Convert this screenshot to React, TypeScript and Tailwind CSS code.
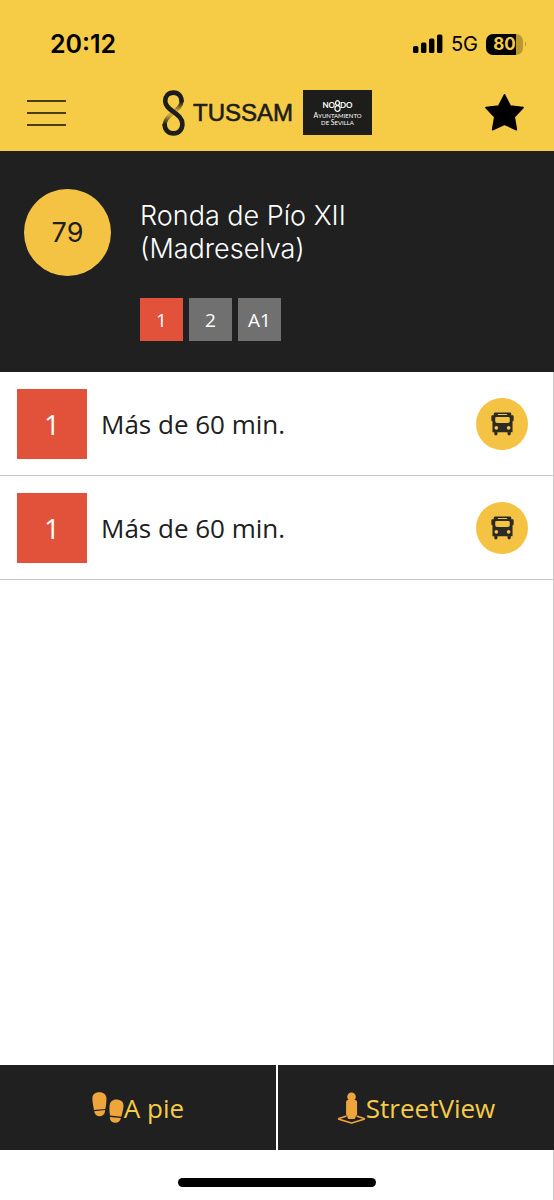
const arrivals = [
  { line: '1', time: 'Más de 60 min.' },
  { line: '1', time: 'Más de 60 min.' },
];

const lines = [
  { name: '1', active: true },
  { name: '2', active: false },
  { name: 'A1', active: false },
];

function StatusBar() {
  return (
    <div className="flex h-[74px] items-center justify-between pt-3.5 pr-7 pl-[50px] text-black">
      <span className="text-[25px] leading-8 font-semibold">20:12</span>
      <div className="flex items-center gap-2">
        <svg className="h-5 w-[30px]" viewBox="0 0 30 20" aria-label="Cobertura">
          <rect x="0" y="12" width="5.4" height="7" rx="1.6" />
          <rect x="8" y="8.5" width="5.4" height="10.5" rx="1.6" />
          <rect x="16" y="4.5" width="5.4" height="14.5" rx="1.6" />
          <rect x="24" y="0.5" width="5.4" height="18.5" rx="1.6" />
        </svg>
        <span className="text-[20px] leading-8">5G</span>
        <div className="flex items-center gap-0.5">
          <div className="flex h-[21px] w-[37px] items-center justify-center rounded-[7px] bg-linear-to-r from-black from-80% to-[#b8982f] to-80%">
            <span className="text-[17px] leading-5 font-bold text-[#f6cc46]">80</span>
          </div>
          <div className="h-1 w-px rounded-r bg-[#b8982f]" />
        </div>
      </div>
    </div>
  );
}

function KnotLogo() {
  return (
    <svg className="h-[46px] w-[23px]" viewBox="0 0 23 46" fill="none" aria-hidden="true">
      <defs>
        <linearGradient id="knot-up" gradientUnits="userSpaceOnUse" x1="0" y1="12" x2="0" y2="34">
          <stop offset="0" stopColor="#1d1d1b" />
          <stop offset="0.4" stopColor="#c9a63d" />
          <stop offset="0.6" stopColor="#c9a63d" />
          <stop offset="1" stopColor="#1d1d1b" />
        </linearGradient>
      </defs>
      <path d="M19.6 11.5C19.4 21 2.8 24 2.6 34.6" stroke="url(#knot-up)" strokeWidth="4" />
      <path
        d="M19.6 12C19.8 6.5 16.8 2.6 11.5 2.6C6.2 2.6 3.2 6.5 3.2 11C3.2 21 20.4 23 20.4 34C20.4 39.6 16.6 43.4 11.5 43.4C6.2 43.4 2.6 39.6 2.6 34"
        stroke="#1d1d1b"
        strokeWidth="4.6"
      />
    </svg>
  );
}

function CityBadge() {
  return (
    <div className="ml-2.5 flex h-[45px] w-[69px] flex-col items-center justify-center bg-[#1d1d1b] font-['Lato'] text-white">
      <div className="flex items-center text-[8px] leading-[11px] font-bold">
        <span>NO</span>
        <svg className="-mx-px h-3 w-[7px]" viewBox="0 0 7 12" fill="none" stroke="currentColor" aria-label="8">
          <ellipse cx="3.5" cy="3" rx="2" ry="2.3" strokeWidth="1.2" />
          <ellipse cx="3.5" cy="8.5" rx="2.6" ry="2.8" strokeWidth="1.2" />
        </svg>
        <span>DO</span>
      </div>
      <div className="text-center text-[6px] leading-[7px]">
        <div>
          <span className="text-[7px]">A</span>YUNTAMIENTO
        </div>
        <div>
          DE <span className="text-[7px]">S</span>EVILLA
        </div>
      </div>
    </div>
  );
}

function Bus() {
  return (
    <svg className="h-6 w-[23px]" viewBox="0 0 25 25" fill="#2b2a26" aria-hidden="true">
      <path
        fillRule="evenodd"
        d="M3 1.2Q3 0 4.5 0H20.5Q22 0 22 1.2V3H23.6Q24.6 3 24.6 4V8.5Q24.6 9.5 23.4 9.5V20.8Q23.4 21.6 22.6 21.6H21.4V23.4Q21.4 25 19.7 25Q18 25 18 23.4V21.6H7V23.4Q7 25 5.3 25Q3.6 25 3.6 23.4V21.6H2.4Q1.6 21.6 1.6 20.8V9.5Q.4 9.5.4 8.5V4Q.4 3 1.4 3H3ZM7.5 1.5V2.8H17.5V1.5ZM6 4.8Q4.6 4.8 4.6 6V9.6Q4.6 11.4 6.6 11.4H18.4Q20.4 11.4 20.4 9.6V6Q20.4 4.8 19 4.8ZM5.8 14.7A2 2 0 1 0 5.8 18.7A2 2 0 1 0 5.8 14.7ZM19.2 14.7A2 2 0 1 0 19.2 18.7A2 2 0 1 0 19.2 14.7Z"
      />
    </svg>
  );
}

function Footprints() {
  return (
    <svg className="h-[31px] w-8" viewBox="0 0 32 31" fill="#eda53c" aria-hidden="true">
      <path d="M.4 6.5C.4 2.5 3 .3 7.3.3C11.8.3 14.6 3 14.5 7C14.4 10.5 14 13.5 13.3 16.9L2 18C1.3 14 .4 10.5.4 6.5Z" />
      <path d="M2.2 19.2L13.1 18.1C13.1 21.8 11.3 24 8.3 24.2C4.9 24.4 2.6 22.4 2.2 19.2Z" />
      <path d="M17.6 13.5C18 9.5 20.8 7.3 24.8 7.5C29.5 7.8 31.9 10.5 31.5 14.5C31.2 18 30.3 21 29.3 24.8L18 23.5C17.5 20 17.3 17 17.6 13.5Z" />
      <path d="M17.8 24.9L28.9 26.1C28.4 29.2 26 31.1 22.9 30.8C19.7 30.5 17.9 28.5 17.8 24.9Z" />
    </svg>
  );
}

function Pegman() {
  return (
    <svg className="h-8 w-[29px]" viewBox="0 0 28 32" fill="#eda53c" aria-hidden="true">
      <path d="M9 24L1.5 26.4Q.7 26.8 1.5 27.2L13 30.8Q14 31.1 15 30.8L26.5 27.2Q27.3 26.8 26.5 26.4L19 24" fill="none" stroke="#eda53c" strokeWidth="1.6" />
      <circle cx="14" cy="4.7" r="4.3" />
      <path d="M10.6 7.8H17.4Q19.6 8 19.6 10V22.5Q19.6 23.3 18.6 23.5L17.8 26Q17.6 27 16.6 27H11.4Q10.4 27 10.2 26L9.6 23.5Q8.6 23.3 8.6 22.5V10Q8.6 8 10.6 7.8Z" />
    </svg>
  );
}

export default function App() {
  return (
    <div className="flex min-h-screen flex-col border-r border-[#c9c9c9] bg-white font-['Open_Sans',sans-serif] text-[#202020]">
      <header className="-mr-px bg-[#f6cc46] font-['Inter',sans-serif]">
        <StatusBar />
        <div className="flex h-[77px] items-center justify-between pr-[29px] pl-[27px]">
          <button type="button" aria-label="Menú" className="flex w-[39px] flex-col gap-2.5">
            <span className="h-0.5 bg-[#4a3d18]" />
            <span className="h-0.5 bg-[#4a3d18]" />
            <span className="h-0.5 bg-[#4a3d18]" />
          </button>
          <div className="mr-4 flex items-center">
            <KnotLogo />
            <span className="ml-2 font-['Liberation_Sans',sans-serif] text-[24px] leading-8 text-[#1d1d1b] [-webkit-text-stroke:0.6px_#1d1d1b]">
              TUSSAM
            </span>
            <CityBadge />
          </div>
          <button type="button" aria-label="Favorito" className="h-[38px] w-[41px]">
            <svg className="h-full w-full" viewBox="0 0 41 38" aria-hidden="true">
              <path
                d="M20.5 0.8L26.3 12L39 13.6L30.2 23L32.4 35.7L20.5 30.2L8.6 35.7L10.8 23L2 13.6L14.7 12Z"
                stroke="black"
                strokeWidth="1.6"
                strokeLinejoin="round"
              />
            </svg>
          </button>
        </div>
      </header>

      <section className="-mr-px flex h-[221px] gap-[29px] bg-[#202020] pt-[38px] pl-6 font-['Inter',sans-serif]">
        <div className="flex size-[87px] shrink-0 items-center justify-center rounded-full bg-[#f4c343] text-[27px] leading-8">
          79
        </div>
        <div>
          <h1 className="max-w-[260px] pt-2.5 text-[27px] leading-[33px] font-light text-white">
            Ronda de Pío XII
            <br />
            (Madreselva)
          </h1>
          <div className="mt-[33px] flex gap-1.5 font-['Open_Sans',sans-serif] text-[19px] leading-6 text-white">
            {lines.map((l) => (
              <button
                type="button"
                key={l.name}
                className={`flex size-[43px] items-center justify-center ${l.active ? 'bg-[#e25139]' : 'bg-[#707070]'}`}
              >
                {l.name}
              </button>
            ))}
          </div>
        </div>
      </section>

      <ul className="flex-1">
        {arrivals.map((a, i) => (
          <li key={i} className="flex h-[104px] items-center border-b border-[#c9c9c9] pr-[25px] pl-[17px]">
            <span className="flex size-[70px] items-center justify-center bg-[#e25139] text-[28px] leading-9 text-white">
              {a.line}
            </span>
            <span className="ml-3.5 flex-1 text-[26px] leading-9">{a.time}</span>
            <button
              type="button"
              aria-label="Ver autobús"
              className="flex size-[52px] items-center justify-center rounded-full bg-[#f4c343]"
            >
              <Bus />
            </button>
          </li>
        ))}
      </ul>

      <nav className="-mr-px grid h-[85px] grid-cols-2 gap-0.5 text-[26px] leading-9 text-[#f6cc46]">
        <a href="#a-pie" className="flex items-center justify-center bg-[#202020]">
          <Footprints />
          A pie
        </a>
        <a href="#streetview" className="flex items-center justify-center bg-[#202020]">
          <Pegman />
          StreetView
        </a>
      </nav>

      <div className="flex h-[50px] justify-center pt-7">
        <div className="h-[9px] w-[198px] rounded-full bg-black" />
      </div>
    </div>
  );
}
